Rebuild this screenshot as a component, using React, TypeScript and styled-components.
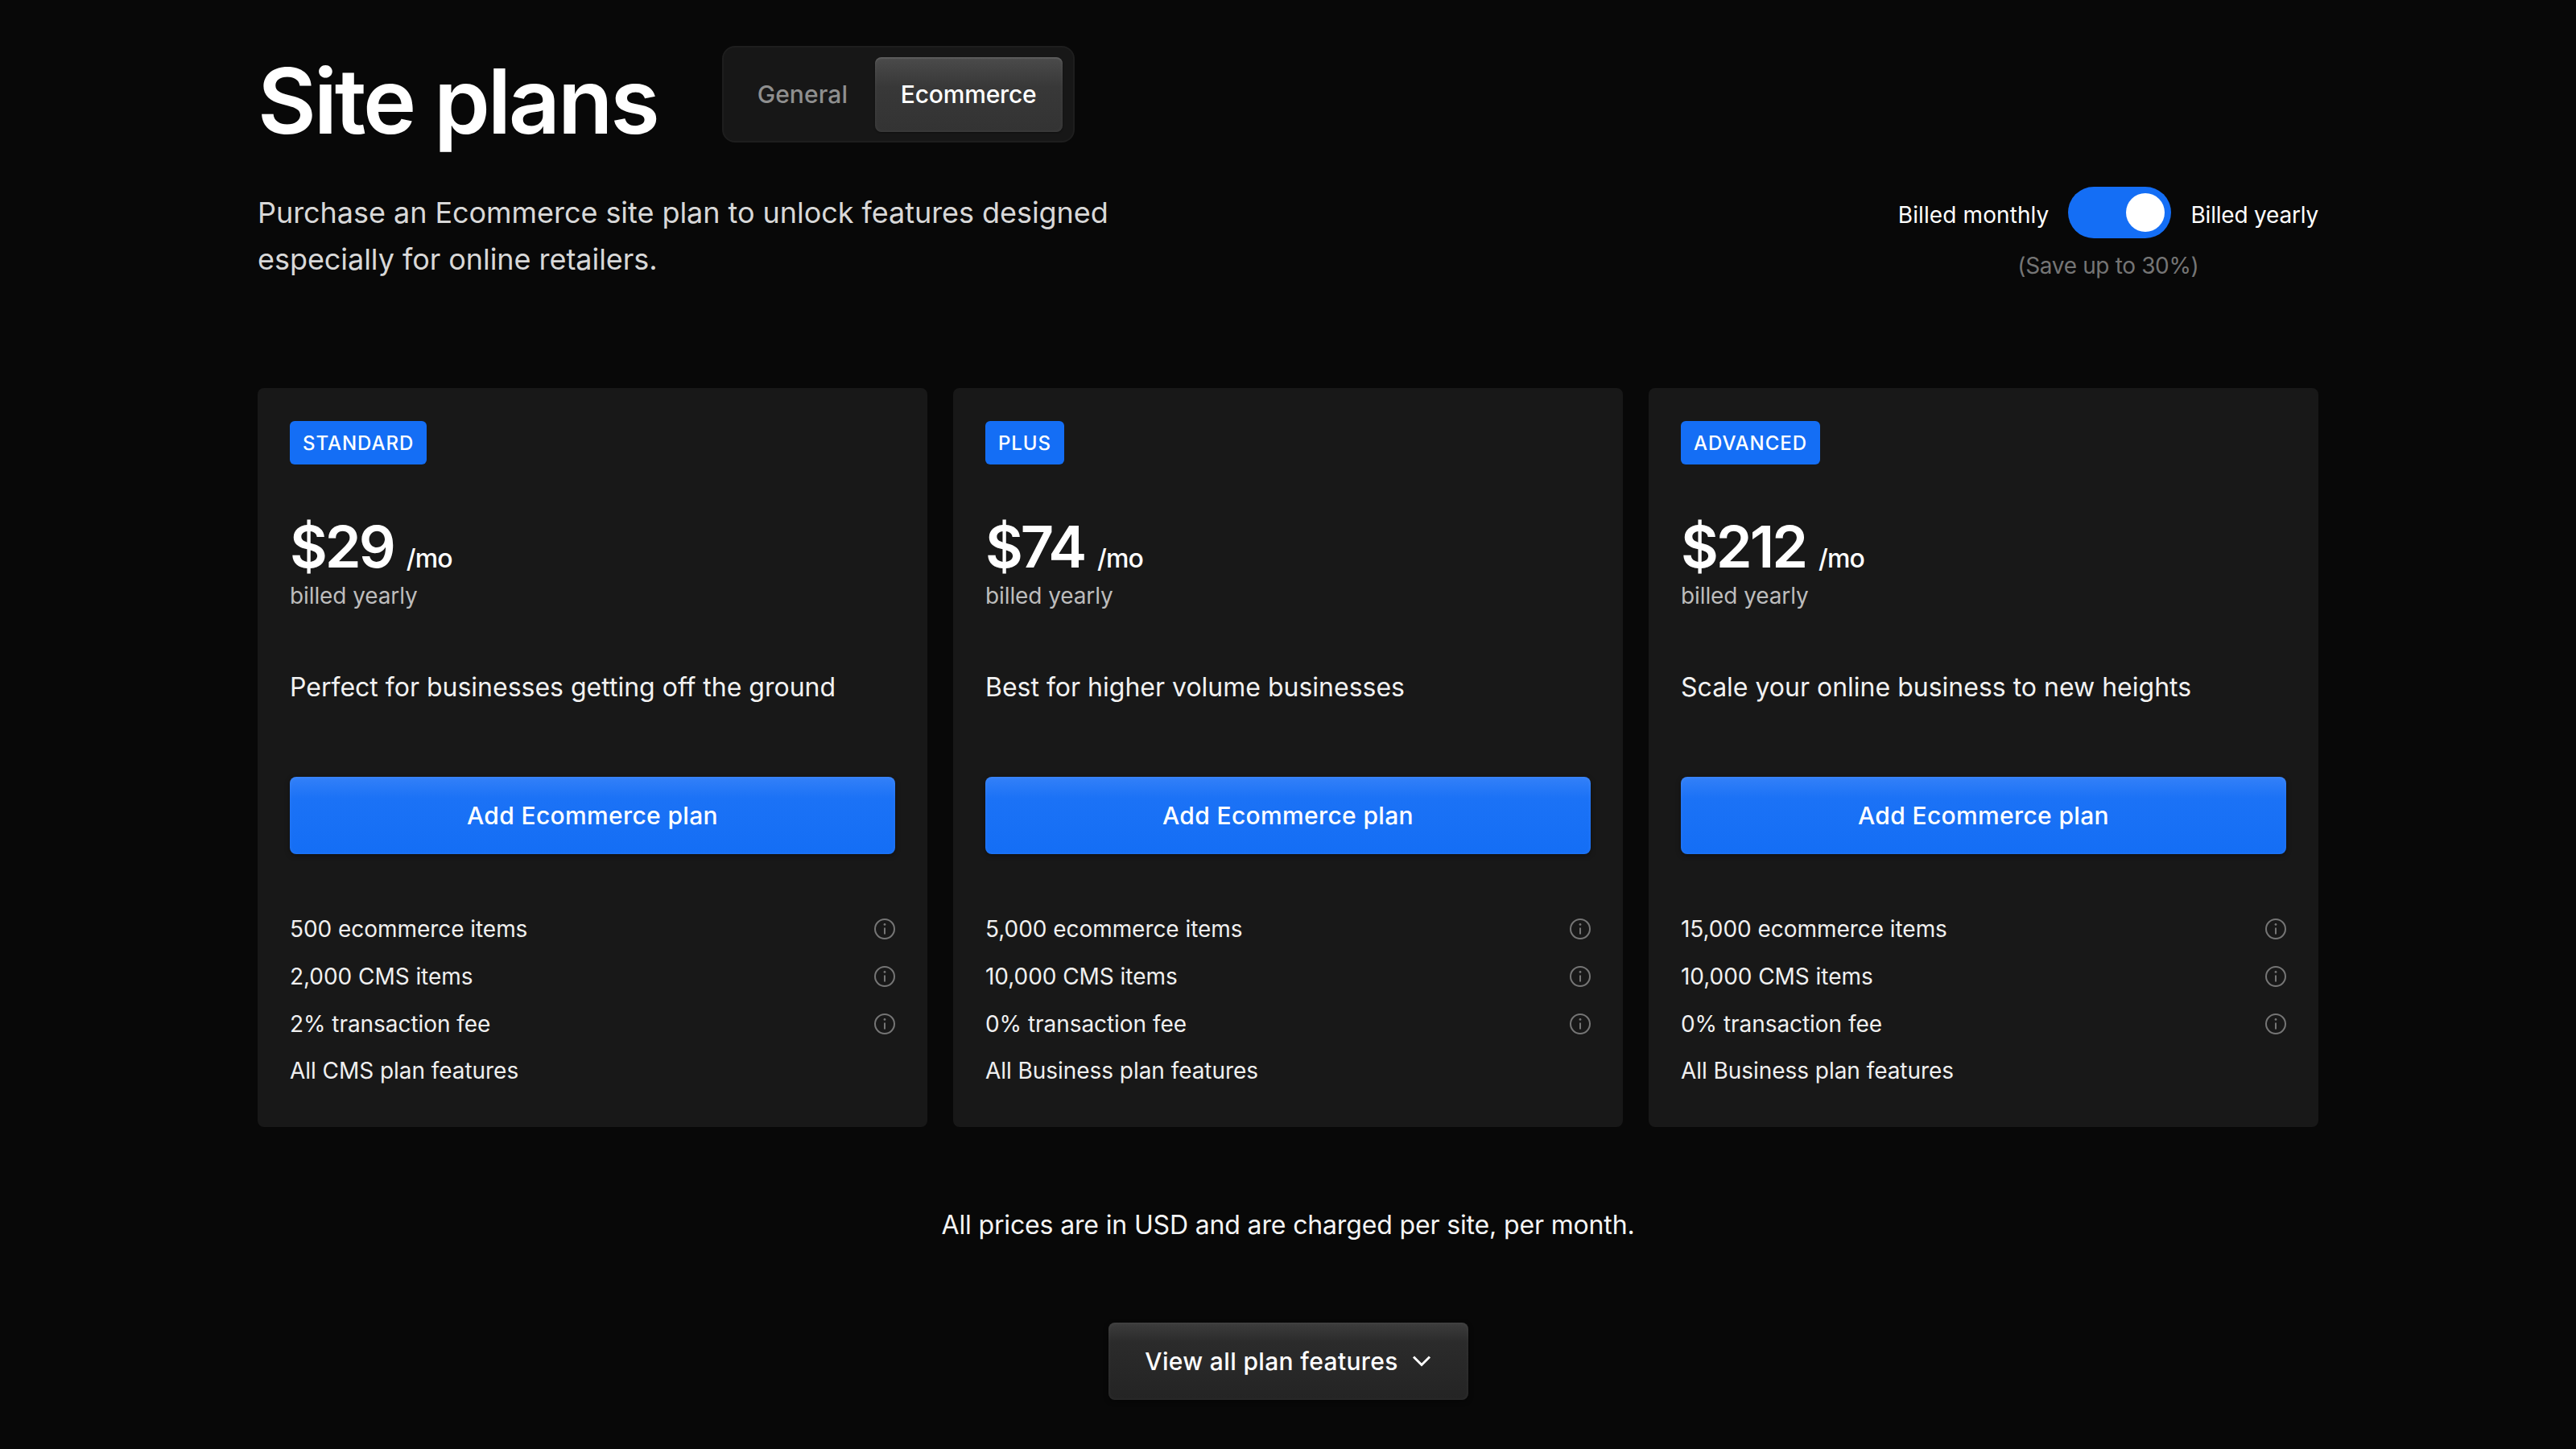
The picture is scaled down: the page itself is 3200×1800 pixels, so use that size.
import React from "react";
import styled, { createGlobalStyle } from "styled-components";

const Global = createGlobalStyle`
  html, body { margin: 0; padding: 0; background: #080808; }
  body { font-family: Inter, "Liberation Sans", sans-serif; color: #fff; -webkit-font-smoothing: antialiased; }
  * { box-sizing: border-box; }
`;

const Page = styled.div`
  width: 3200px;
  height: 1800px;
  overflow: hidden;
  padding: 57px 320px 0;
  background: #080808;
`;
const Header = styled.header`
  display: flex;
  justify-content: space-between;
  align-items: flex-start;
  height: 425px;
`;
const Intro = styled.div`
  display: flex;
  flex-direction: column;
`;
const TitleRow = styled.div`
  display: flex;
  align-items: center;
  gap: 80px;
`;
const Title = styled.h1`
  margin: 0;
  font-size: 112px;
  line-height: 120px;
  font-weight: 600;
  letter-spacing: -3.2px;
  position: relative;
  top: 8px;
`;
const Segments = styled.div`
  display: flex;
  align-items: center;
  height: 120px;
  width: 438px;
  padding: 0 13px 0 42px;
  background: #171717;
  border: 2px solid #1e1e1e;
  border-radius: 16px;
`;
const Segment = styled.div<{ $active?: boolean }>`
  font-size: 30px;
  font-weight: 500;
  letter-spacing: ${(p) => (p.$active ? "-0.2px" : "0.1px")};
  color: ${(p) => (p.$active ? "#fff" : "#8f8f8f")};
  ${(p) =>
    p.$active
      ? `
    width: 233px;
    height: 93px;
    margin-left: auto;
    display: flex;
    align-items: center;
    justify-content: center;
    border-radius: 8px;
    background: linear-gradient(180deg, #4b4b4b 0%, #383838 40%, #333 100%);
    box-shadow: inset 0 2px 0 rgba(255,255,255,0.08), inset 0 0 5px rgba(255,255,255,0.07), 0 1px 2px rgba(0,0,0,0.4);
  `
      : ""}
`;
const Lead = styled.p`
  margin: 58px 0 0;
  width: 1100px;
  font-size: 36px;
  line-height: 58px;
  font-weight: 400;
  letter-spacing: -0.05px;
  color: #d8d8d8;
`;
const Billing = styled.div`
  display: flex;
  flex-direction: column;
  align-items: center;
  padding-top: 175px;
`;
const BillingRow = styled.div`
  display: flex;
  align-items: center;
  gap: 24px;
  font-size: 28px;
  color: #fff;
`;
const BillingLabel = styled.span<{ $tight?: boolean }>`
  padding-top: 6px;
  letter-spacing: ${(p) => (p.$tight ? "-0.2px" : "0.1px")};
`;
const Switch = styled.div`
  width: 128px;
  height: 64px;
  padding: 8px;
  border-radius: 32px;
  background: #146ef5;
  display: flex;
  justify-content: flex-end;
`;
const Knob = styled.div`
  width: 48px;
  height: 48px;
  border-radius: 50%;
  background: #fff;
`;
const Save = styled.div`
  margin-top: 16px;
  font-size: 28px;
  line-height: 36px;
  letter-spacing: -0.35px;
  color: #757575;
`;
const Cards = styled.div`
  display: grid;
  grid-template-columns: repeat(3, 832px);
  gap: 32px;
`;
const Card = styled.section`
  height: 918px;
  padding: 41px 40px 0;
  background: #181818;
  border-radius: 8px;
  display: flex;
  flex-direction: column;
`;
const Badge = styled.div`
  align-self: flex-start;
  height: 54px;
  padding: 0 16px;
  display: flex;
  align-items: center;
  background: #146ef5;
  border-radius: 6px;
  font-size: 24px;
  font-weight: 500;
  letter-spacing: 0.95px;
`;
const PriceRow = styled.div`
  display: flex;
  align-items: baseline;
  gap: 16px;
  margin-top: 58px;
  height: 88px;
`;
const Amount = styled.span`
  font-size: 72px;
  line-height: 88px;
  font-weight: 600;
  letter-spacing: -3px;
`;
const Per = styled.span`
  font-size: 32px;
  font-weight: 500;
  letter-spacing: -0.9px;
`;
const Billed = styled.div`
  font-size: 28px;
  line-height: 40px;
  margin-top: -3px;
  letter-spacing: -0.1px;
  color: #bdbdbd;
`;
const Desc = styled.div`
  margin-top: 70px;
  font-size: 32px;
  line-height: 48px;
  letter-spacing: 0;
  color: #f2f2f2;
`;
const PlanButton = styled.div`
  margin-top: 87px;
  height: 96px;
  flex: none;
  display: flex;
  align-items: center;
  justify-content: center;
  border-radius: 8px;
  font-size: 30px;
  font-weight: 500;
  letter-spacing: 0.35px;
  background: linear-gradient(180deg, #3380f8 0%, #1b72f6 28%, #146ef5 100%);
  box-shadow: inset 0 0 5px rgba(255, 255, 255, 0.08), 0 2px 6px rgba(0, 0, 0, 0.35);
`;
const Features = styled.ul`
  list-style: none;
  margin: 64px 0 0;
  padding: 0;
`;
const Feature = styled.li`
  display: flex;
  align-items: center;
  justify-content: space-between;
  height: 58.67px;
  font-size: 28px;
  letter-spacing: -0.05px;
  color: #f0f0f0;
`;
const InfoIcon = styled.svg`
  width: 26px;
  height: 26px;
  flex: none;
  color: #757575;
`;
const Note = styled.p`
  margin: 94px 0 0;
  text-align: center;
  font-size: 32px;
  line-height: 56px;
  letter-spacing: -0.15px;
  color: #f5f5f5;
`;
const FooterRow = styled.div`
  display: flex;
  justify-content: center;
  margin-top: 93px;
`;
const ViewAll = styled.div`
  width: 447px;
  height: 96px;
  display: flex;
  align-items: center;
  justify-content: center;
  gap: 17px;
  border-radius: 8px;
  font-size: 30px;
  font-weight: 500;
  letter-spacing: 0.35px;
  background: linear-gradient(180deg, #3d3d3d 0%, #2b2b2b 25%, #242424 100%);
  box-shadow: inset 0 0 5px rgba(255, 255, 255, 0.06), 0 2px 6px rgba(0, 0, 0, 0.4);
`;

const Info = () => (
  <InfoIcon viewBox="0 0 26 26" fill="none" stroke="currentColor" strokeWidth="2">
    <circle cx="13" cy="13" r="12" />
    <path d="M13 11.5V19.5" />
    <circle cx="13" cy="7.4" r="1.4" fill="currentColor" stroke="none" />
  </InfoIcon>
);

const plans = [
  {
    name: "STANDARD",
    price: "$29",
    desc: "Perfect for businesses getting off the ground",
    features: ["500 ecommerce items", "2,000 CMS items", "2% transaction fee", "All CMS plan features"],
  },
  {
    name: "PLUS",
    price: "$74",
    desc: "Best for higher volume businesses",
    features: ["5,000 ecommerce items", "10,000 CMS items", "0% transaction fee", "All Business plan features"],
  },
  {
    name: "ADVANCED",
    price: "$212",
    desc: "Scale your online business to new heights",
    features: ["15,000 ecommerce items", "10,000 CMS items", "0% transaction fee", "All Business plan features"],
  },
];

export default function App() {
  return (
    <Page>
      <Global />
      <Header>
        <Intro>
          <TitleRow>
            <Title>Site plans</Title>
            <Segments>
              <Segment>General</Segment>
              <Segment $active>Ecommerce</Segment>
            </Segments>
          </TitleRow>
          <Lead>
            Purchase an Ecommerce site plan to unlock features designed
            <br />
            especially for online retailers.
          </Lead>
        </Intro>
        <Billing>
          <BillingRow>
            <BillingLabel>Billed monthly</BillingLabel>
            <Switch>
              <Knob />
            </Switch>
            <BillingLabel $tight>Billed yearly</BillingLabel>
          </BillingRow>
          <Save>(Save up to 30%)</Save>
        </Billing>
      </Header>
      <Cards>
        {plans.map((plan) => (
          <Card key={plan.name}>
            <Badge>{plan.name}</Badge>
            <PriceRow>
              <Amount>{plan.price}</Amount>
              <Per>/mo</Per>
            </PriceRow>
            <Billed>billed yearly</Billed>
            <Desc>{plan.desc}</Desc>
            <PlanButton>Add Ecommerce plan</PlanButton>
            <Features>
              {plan.features.map((f, i) => (
                <Feature key={f}>
                  <span>{f}</span>
                  {i < 3 && <Info />}
                </Feature>
              ))}
            </Features>
          </Card>
        ))}
      </Cards>
      <Note>All prices are in USD and are charged per site, per month.</Note>
      <FooterRow>
        <ViewAll>
          View all plan features
          <svg width="24" height="16" viewBox="0 0 24 16" fill="none" stroke="#fff" strokeWidth="3">
            <path d="M2 2.5l10 10 10-10" />
          </svg>
        </ViewAll>
      </FooterRow>
    </Page>
  );
}
